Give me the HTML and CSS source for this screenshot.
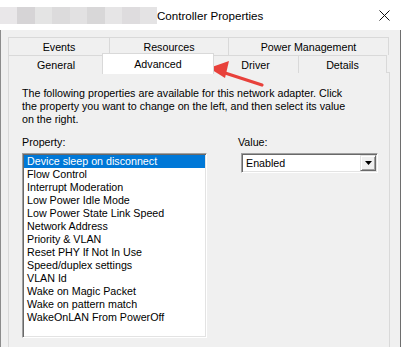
FILE: index.html
```html
<!DOCTYPE html>
<html>
<head>
<meta charset="utf-8">
<link rel="stylesheet" href="styles.css">
</head>
<body>
<div class="window">
  <div class="titlebar">
    <div class="blur">
      <span class="b1"></span><span class="b2"></span><span class="b3"></span><span class="b4"></span><span class="b5"></span><span class="b6"></span><span class="b7"></span><span class="b8"></span><span class="b9"></span>
    </div>
    <div class="title">Controller Properties</div>
    <svg class="close" width="11" height="11" viewBox="0 0 11 11"><path d="M0.5 0.5 L10.5 10.5 M10.5 0.5 L0.5 10.5" stroke="#111" stroke-width="1" fill="none"/></svg>
  </div>
  <div class="client">
    <div class="tabs">
      <div class="tabrow">
        <div class="tab w-events">Events</div>
        <div class="tab w-resources">Resources</div>
        <div class="tab w-power">Power Management</div>
      </div>
      <div class="tabrow">
        <div class="tab w-general">General</div>
        <div class="tab w-advanced selected">Advanced</div>
        <div class="tab w-driver">Driver</div>
        <div class="tab w-details">Details</div>
      </div>
    </div>
    <div class="panel">
      <p class="desc">The following properties are available for this network adapter. Click<br>the property you want to change on the left, and then select its value<br>on the right.</p>
      <div class="fields">
        <div class="col-left">
          <div class="label">Property:</div>
          <div class="listbox">
            <div class="item sel">Device sleep on disconnect</div>
            <div class="item">Flow Control</div>
            <div class="item">Interrupt Moderation</div>
            <div class="item">Low Power Idle Mode</div>
            <div class="item">Low Power State Link Speed</div>
            <div class="item">Network Address</div>
            <div class="item">Priority &amp; VLAN</div>
            <div class="item">Reset PHY If Not In Use</div>
            <div class="item">Speed/duplex settings</div>
            <div class="item">VLAN Id</div>
            <div class="item">Wake on Magic Packet</div>
            <div class="item">Wake on pattern match</div>
            <div class="item">WakeOnLAN From PowerOff</div>
          </div>
        </div>
        <div class="col-right">
          <div class="label">Value:</div>
          <div class="combo">
            <span class="combo-text">Enabled</span>
            <span class="combo-btn"><svg width="7" height="4" viewBox="0 0 7 4"><path d="M0 0 H7 L3.5 4 Z" fill="#000"/></svg></span>
          </div>
        </div>
      </div>
    </div>
  </div>
  <svg class="annot" width="80" height="50" viewBox="200 50 80 50">
    <line x1="262" y1="85" x2="222" y2="72" stroke="#e8413b" stroke-width="3.2" stroke-linecap="round"/>
    <polygon points="209,68 229,61 225,78" fill="#e8413b"/>
  </svg>
</div>
</body>
</html>
```
FILE: styles.css
```css
* { box-sizing: border-box; }
html, body { margin: 0; padding: 0; }
body {
  width: 401px;
  height: 347px;
  overflow: hidden;
  background: #f0f0f0;
  font-family: "Liberation Sans", Arial, sans-serif;
  font-size: 10.7px;
  color: #000;
}
.window {
  position: relative;
  height: 347px;
  overflow: hidden;
}
.titlebar {
  height: 30px;
  background: #fff;
  display: flex;
  align-items: center;
}
.blur {
  display: flex;
  width: 157px;
  height: 17px;
  margin-top: 1px;
}
.blur span { flex: 1; height: 100%; }
.blur .b1 { background: #e9e7e9; }
.blur .b2 { background: #d6d4d6; }
.blur .b3 { background: #e4e4e4; }
.blur .b4 { background: #dcdbdc; }
.blur .b5 { background: #e2e1e2; }
.blur .b6 { background: #d8d7d8; }
.blur .b7 { background: #e6e5e6; }
.blur .b8 { background: #dedcde; }
.blur .b9 { background: #e4e3e4; }
.title {
  font-size: 11.6px;
}
.close {
  margin-left: auto;
  margin-right: 11px;
}
.client {
  height: 317px;
  overflow: hidden;
  border-left: 1px solid #8c8c8c;
  border-right: 1px solid #6e6e6e;
  padding: 7px 10px 0 7px;
}
.tabrow {
  display: flex;
  height: 18px;
}
.tab {
  height: 18px;
  border: 1px solid #d9d9d9;
  border-bottom: none;
  background: #f0f0f0;
  display: flex;
  align-items: center;
  justify-content: center;
  line-height: 14px;
  margin-left: -1px;
}
.tab:first-child { margin-left: 0; }
.w-events { width: 102px; }
.w-resources { width: 120px; }
.w-power { width: 161px; }
.w-general { width: 96px; }
.w-advanced { width: 112px; }
.w-driver { width: 87px; }
.w-details { width: 89px; }
.tab.selected {
  position: relative;
  z-index: 2;
  height: 21px;
  margin-top: -2px;
  margin-bottom: -1px;
  margin-left: -2px;
  margin-right: -1px;
  background: #fff;
  padding-bottom: 1px;
}
.panel {
  margin-top: -1px;
  height: 285px;
  border: 1px solid #d9d9d9;
  background: #f0f0f0;
  padding: 14px 13px 0 13px;
}
.desc {
  margin: 0;
  line-height: 13px;
}
.fields {
  display: flex;
  margin-top: 10px;
  gap: 31px;
}
.label {
  line-height: 13px;
  margin-bottom: 4px;
}
.col-left { width: 185px; }
.col-right { width: 141px; }
.listbox {
  width: 185px;
  height: 185px;
  background: #fff;
  border: 1px solid;
  border-color: #a0a0a0 #ffffff #ffffff #a0a0a0;
  box-shadow: inset 1px 1px 0 #696969, inset -1px -1px 0 #e3e3e3;
  padding: 1px;
}
.item {
  height: 13px;
  line-height: 13px;
  padding-left: 3px;
  white-space: nowrap;
}
.item.sel {
  background: #0078d7;
  color: #fff;
}
.combo {
  margin-left: 3px;
  width: 137px;
  height: 20px;
  background: #fff;
  border: 1px solid;
  border-color: #a0a0a0 #ffffff #ffffff #a0a0a0;
  box-shadow: inset 1px 1px 0 #696969, inset -1px -1px 0 #e3e3e3;
  padding: 1px;
  display: flex;
  align-items: center;
}
.combo-text {
  padding-left: 3px;
  line-height: 16px;
}
.combo-btn {
  margin-left: auto;
  width: 16px;
  height: 16px;
  background: #f0f0f0;
  border: 1px solid;
  border-color: #e3e3e3 #696969 #696969 #e3e3e3;
  box-shadow: inset 1px 1px 0 #ffffff, inset -1px -1px 0 #a0a0a0;
  display: flex;
  align-items: center;
  justify-content: center;
}
.annot {
  position: absolute;
  left: 200px;
  top: 50px;
}
```
